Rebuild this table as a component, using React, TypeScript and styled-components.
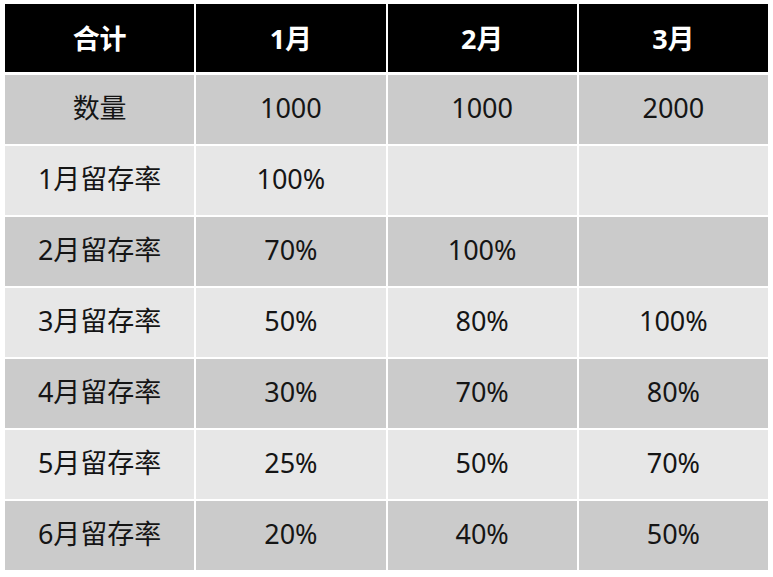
import React from 'react';
import styled, { createGlobalStyle } from 'styled-components';

const GlobalStyle = createGlobalStyle`
  html, body {
    margin: 0;
    padding: 0;
    background: #ffffff;
  }
  body {
    font-family: "Noto Sans", "Noto Sans CJK SC", sans-serif;
  }
`;

const Page = styled.div`
  padding: 4px 5px 6px 5px;
  width: 763px;
`;

const Table = styled.div`
  display: flex;
  flex-direction: column;
  gap: 2px;
`;

type Tone = 'head' | 'dark' | 'light';

const Row = styled.div<{ $tone: Tone }>`
  display: grid;
  grid-template-columns: repeat(4, 1fr);
  gap: 2px;
  height: ${(p) => (p.$tone === 'head' ? '68px' : '69px')};
  margin-bottom: ${(p) => (p.$tone === 'head' ? '1px' : '0')};
`;

const Cell = styled.div<{ $tone: Tone }>`
  display: flex;
  align-items: center;
  justify-content: center;
  font-size: 27px;
  line-height: 1;
  padding-bottom: ${(p) => (p.$tone === 'head' ? '0' : '4px')};
  background: ${(p) =>
    p.$tone === 'head' ? '#000000' : p.$tone === 'dark' ? '#cbcbcb' : '#e7e7e7'};
  color: ${(p) => (p.$tone === 'head' ? '#ffffff' : '#151515')};
  font-weight: ${(p) => (p.$tone === 'head' ? 700 : 400)};
`;

const header = ['合计', '1月', '2月', '3月'];

const rows: string[][] = [
  ['数量', '1000', '1000', '2000'],
  ['1月留存率', '100%', '', ''],
  ['2月留存率', '70%', '100%', ''],
  ['3月留存率', '50%', '80%', '100%'],
  ['4月留存率', '30%', '70%', '80%'],
  ['5月留存率', '25%', '50%', '70%'],
  ['6月留存率', '20%', '40%', '50%'],
];

const App = () => {
  return (
    <Page>
      <GlobalStyle />
      <Table>
        <Row $tone="head">
          {header.map((h) => (
            <Cell key={h} $tone="head">{h}</Cell>
          ))}
        </Row>
        {rows.map((r, i) => {
          const tone: Tone = i % 2 === 0 ? 'dark' : 'light';
          return (
            <Row key={r[0]} $tone={tone}>
              {r.map((v, j) => (
                <Cell key={j} $tone={tone}>{v}</Cell>
              ))}
            </Row>
          );
        })}
      </Table>
    </Page>
  );
};

export default App;
